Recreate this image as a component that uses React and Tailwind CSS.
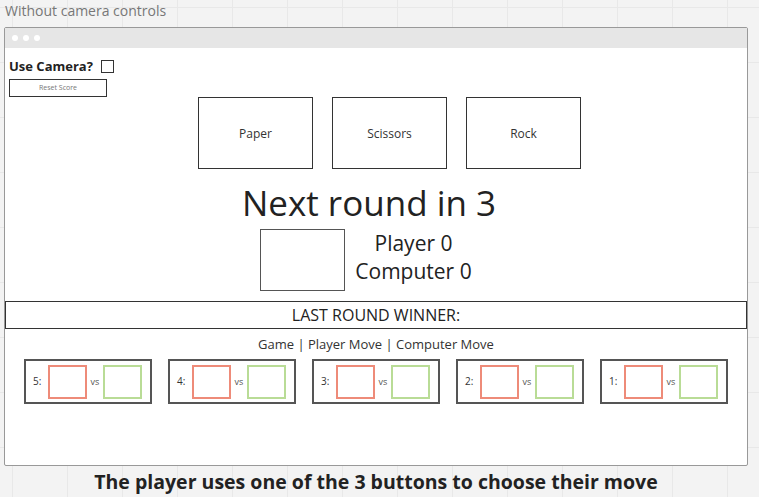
import React from 'react';

const moves = ['Paper', 'Scissors', 'Rock'];
const history = [5, 4, 3, 2, 1];

const HistoryCard = ({ game }) => (
    <div className="flex items-center w-[128px] h-[45px] border-2 border-[#555] bg-white">
        <span className="w-[22px] pl-[7px] text-[10px] text-[#333]">{game}:</span>
        <div className="w-[39px] h-[34px] border-2 border-[#ee8b79]" />
        <span className="w-[16px] text-center text-[9px] text-[#555]">vs</span>
        <div className="w-[39px] h-[34px] border-2 border-[#b9dc96]" />
    </div>
);

export default function App() {
    return (
        <div className="w-[759px] h-[497px] overflow-hidden bg-[#f3f3f3] bg-[linear-gradient(to_right,#e8e8e8_1px,transparent_1px),linear-gradient(to_bottom,#e8e8e8_1px,transparent_1px)] bg-[size:55px_55px] bg-[position:12px_7px] font-['Open_Sans',sans-serif]">
            <div className="h-[27px] pl-[5px] pt-[1px] text-[14px] leading-[20px] text-[#777]">
                Without camera controls
            </div>

            {/* window frame */}
            <div className="ml-[4px] w-[744px] h-[439px] border border-[#999] rounded-[2px] bg-white flex flex-col">
                <div className="h-[20px] bg-[#e6e6e6] flex items-center gap-[5px] pl-[7px]">
                    <span className="w-[6px] h-[6px] rounded-full bg-white" />
                    <span className="w-[6px] h-[6px] rounded-full bg-white" />
                    <span className="w-[6px] h-[6px] rounded-full bg-white" />
                </div>

                <div className="pt-[9px] pl-[4px] flex items-center h-[18px] box-content">
                    <span className="text-[13px] font-bold text-[#222] leading-[18px]">Use Camera?</span>
                    <span className="ml-[8px] w-[13px] h-[13px] border border-[#333]" />
                </div>

                <div className="mt-[4px] ml-[4px] w-[98px] h-[18px] border border-[#333] flex items-center justify-center text-[7px] text-[#777]">
                    Reset Score
                </div>

                <div className="flex gap-[19px] pl-[193px]">
                    {moves.map((m) => (
                        <div
                            key={m}
                            className="w-[115px] h-[72px] border border-[#333] flex items-center justify-center text-[12px] text-[#333]"
                        >
                            <span className="mt-[2px]">{m}</span>
                        </div>
                    ))}
                </div>

                <div className="mt-[12px] pr-[14px] text-center text-[35px] leading-[44px] text-[#222]">
                    Next round in 3
                </div>

                <div className="mt-[4px] flex pl-[255px]">
                    <div className="w-[85px] h-[62px] border-[1.5px] border-[#555]" />
                    <div className="ml-[6px] w-[125px] flex flex-col items-center text-[21px] leading-[28px] text-[#222]">
                        <span>Player 0</span>
                        <span>Computer 0</span>
                    </div>
                </div>

                <div className="mt-[10px] h-[28px] border border-[#333] flex items-center justify-center text-[16px] text-[#222]">
                    LAST ROUND WINNER:
                </div>

                <div className="mt-[6px] text-center text-[13px] leading-[18px] text-[#333]">
                    Game | Player Move | Computer Move
                </div>

                <div className="mt-[6px] pl-[19px] flex gap-[16px]">
                    {history.map((g) => (
                        <HistoryCard key={g} game={g} />
                    ))}
                </div>
            </div>

            <div className="h-[31px] pr-[7px] flex items-center justify-center text-[19.5px] font-bold text-[#222]">
                The player uses one of the 3 buttons to choose their move
            </div>
        </div>
    );
}
